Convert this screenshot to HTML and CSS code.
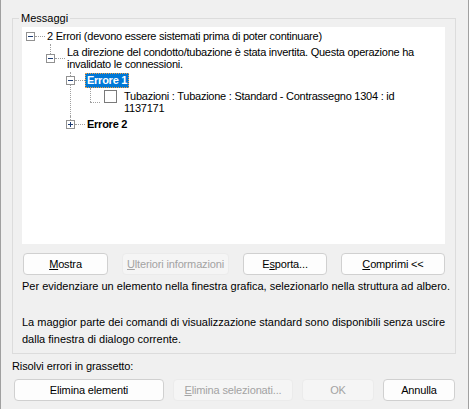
FILE: index.html
```html
<!DOCTYPE html>
<html lang="it">
<head>
<meta charset="utf-8">
<title>Messaggi</title>
<link rel="stylesheet" href="styles.css">
</head>
<body>
<div class="dialog">
  <fieldset class="group">
    <legend>Messaggi</legend>
    <div class="tree">
      <ul>
        <li class="root">
          <div class="row">
            <span class="gutter"><svg class="exp" width="9" height="9" viewBox="0 0 9 9"><rect x="0.5" y="0.5" width="8" height="8" fill="#fff" stroke="#919191"/><path d="M2 4.5h5" stroke="#1e3d74"/></svg><span class="hline"></span></span>
            <span class="label">2 Errori (devono essere sistemati prima di poter continuare)</span>
          </div>
          <ul>
            <li class="last tall">
              <div class="row tall">
                <span class="gutter"><svg class="exp" width="9" height="9" viewBox="0 0 9 9"><rect x="0.5" y="0.5" width="8" height="8" fill="#fff" stroke="#919191"/><path d="M2 4.5h5" stroke="#1e3d74"/></svg><span class="hline"></span></span>
                <span class="label">La direzione del condotto/tubazione è stata invertita. Questa operazione ha<br>invalidato le connessioni.</span>
              </div>
              <ul>
                <li>
                  <div class="row">
                    <span class="gutter"><svg class="exp" width="9" height="9" viewBox="0 0 9 9"><rect x="0.5" y="0.5" width="8" height="8" fill="#fff" stroke="#919191"/><path d="M2 4.5h5" stroke="#1e3d74"/></svg><span class="hline"></span></span>
                    <span class="label bold selected">Errore 1</span>
                  </div>
                  <ul>
                    <li class="last tall">
                      <div class="row tall">
                        <span class="gutter leaf"><span class="hline"></span></span>
                        <span class="check"></span>
                        <span class="label check-label">Tubazioni : Tubazione : Standard - Contrassegno 1304 : id<br>1137171</span>
                      </div>
                    </li>
                  </ul>
                </li>
                <li class="last">
                  <div class="row">
                    <span class="gutter"><svg class="exp" width="9" height="9" viewBox="0 0 9 9"><rect x="0.5" y="0.5" width="8" height="8" fill="#fff" stroke="#919191"/><path d="M2 4.5h5M4.5 2v5" stroke="#1e3d74"/></svg><span class="hline"></span></span>
                    <span class="label bold">Errore 2</span>
                  </div>
                </li>
              </ul>
            </li>
          </ul>
        </li>
      </ul>
    </div>
    <div class="actions">
      <button class="btn w-mostra"><u>M</u>ostra</button>
      <button class="btn w-info" disabled><u>U</u>lteriori informazioni</button>
      <button class="btn w-esporta">E<u>s</u>porta...</button>
      <button class="btn w-comprimi"><u>C</u>omprimi &lt;&lt;</button>
    </div>
    <p class="hint">Per evidenziare un elemento nella finestra grafica, selezionarlo nella struttura ad albero.</p>
    <p class="note">La maggior parte dei comandi di visualizzazione standard sono disponibili senza uscire<br>dalla finestra di dialogo corrente.</p>
  </fieldset>
  <p class="resolve">Risolvi errori in grassetto:</p>
  <div class="footer-actions">
    <button class="btn w-elimina">Elimina elementi</button>
    <button class="btn w-sel" disabled><u>E</u>limina selezionati...</button>
    <button class="btn w-ok" disabled>OK</button>
    <button class="btn w-annulla">Annulla</button>
  </div>
</div>
</body>
</html>
```

FILE: styles.css
```css
* { box-sizing: border-box; }
html, body { margin: 0; }
body {
  width: 469px;
  height: 409px;
  overflow: hidden;
  background: #f0f0f0;
  border-left: 1px solid #a0a0a0;
  border-right: 1px solid #a0a0a0;
  font: 11px/16px "Liberation Sans", Arial, sans-serif;
  color: #000;
}
.dialog { padding: 11px 0 0 11px; }

.group {
  width: 444px;
  margin: 0;
  min-width: 0;
  padding: 2px 10px 5px 9px;
  border: 1px solid #dcdcdc;
}
.group legend {
  padding: 0 2px;
  margin-left: -3px;
  line-height: 14px;
}

.tree {
  background: #fff;
  height: 217px;
  padding-top: 1px;
  overflow: hidden;
  letter-spacing: -0.25px;
}
.tree ul { list-style: none; margin: 0; padding: 0 0 0 20px; }
.tree > ul { padding-left: 0; }
.tree li { position: relative; }
.tree li li::before {
  content: "";
  position: absolute;
  left: 8px;
  top: 0;
  bottom: 0;
  border-left: 1px dotted #a0a0a0;
}
.tree li.last::before { bottom: auto; height: 8px; }
.tree li.last.tall::before { height: 14px; }

.row { display: flex; align-items: center; height: 16px; }
.row.tall { height: 28px; }
.gutter {
  display: flex;
  align-items: center;
  width: 23px;
  height: 100%;
  padding-left: 4px;
  flex-shrink: 0;
}
.gutter.leaf { width: 18px; padding-left: 8px; }
.exp { display: block; flex-shrink: 0; position: relative; }
.hline { width: 10px; height: 0; border-top: 1px dotted #a0a0a0; }

.label {
  padding: 0 1px;
  border: 1px solid transparent;
  line-height: 13px;
  white-space: nowrap;
}
.row.tall .label { line-height: 12px; }
.bold { font-weight: bold; }
.label.selected {
  background: #0078d7;
  color: #fff;
  border: 1px dotted #f5a142;
}
.check {
  align-self: flex-start;
  width: 13px;
  height: 13px;
  margin: 2px 0 0 4px;
  border: 1px solid #7a7a7a;
  background: #fff;
  flex-shrink: 0;
}
.check-label { margin-left: 5px; }

.btn {
  height: 22px;
  padding: 0;
  border: 1px solid #d0d0d0;
  border-radius: 4px;
  background: #fdfdfd;
  font: inherit;
  letter-spacing: -0.15px;
  color: #000;
}
.btn:disabled {
  background: #f5f5f5;
  border-color: #ebebeb;
  color: #a3a3a3;
}
.actions {
  display: flex;
  justify-content: space-between;
  margin-top: 9px;
  padding-left: 1px;
}
.w-mostra { width: 85px; }
.w-info { width: 107px; }
.w-esporta { width: 84px; }
.w-comprimi { width: 104px; }

.hint { margin: 3px 0 0; line-height: 16px; white-space: nowrap; }
.note { margin: 20px 0 0; line-height: 17px; white-space: nowrap; }

.resolve { margin: 4px 0 0; line-height: 16px; letter-spacing: -0.1px; }
.footer-actions { display: flex; gap: 9px; margin: 5px 0 0 2px; }
.w-elimina { width: 150px; }
.w-sel { width: 120px; }
.w-ok { width: 72px; }
.w-annulla { width: 72px; }
```
